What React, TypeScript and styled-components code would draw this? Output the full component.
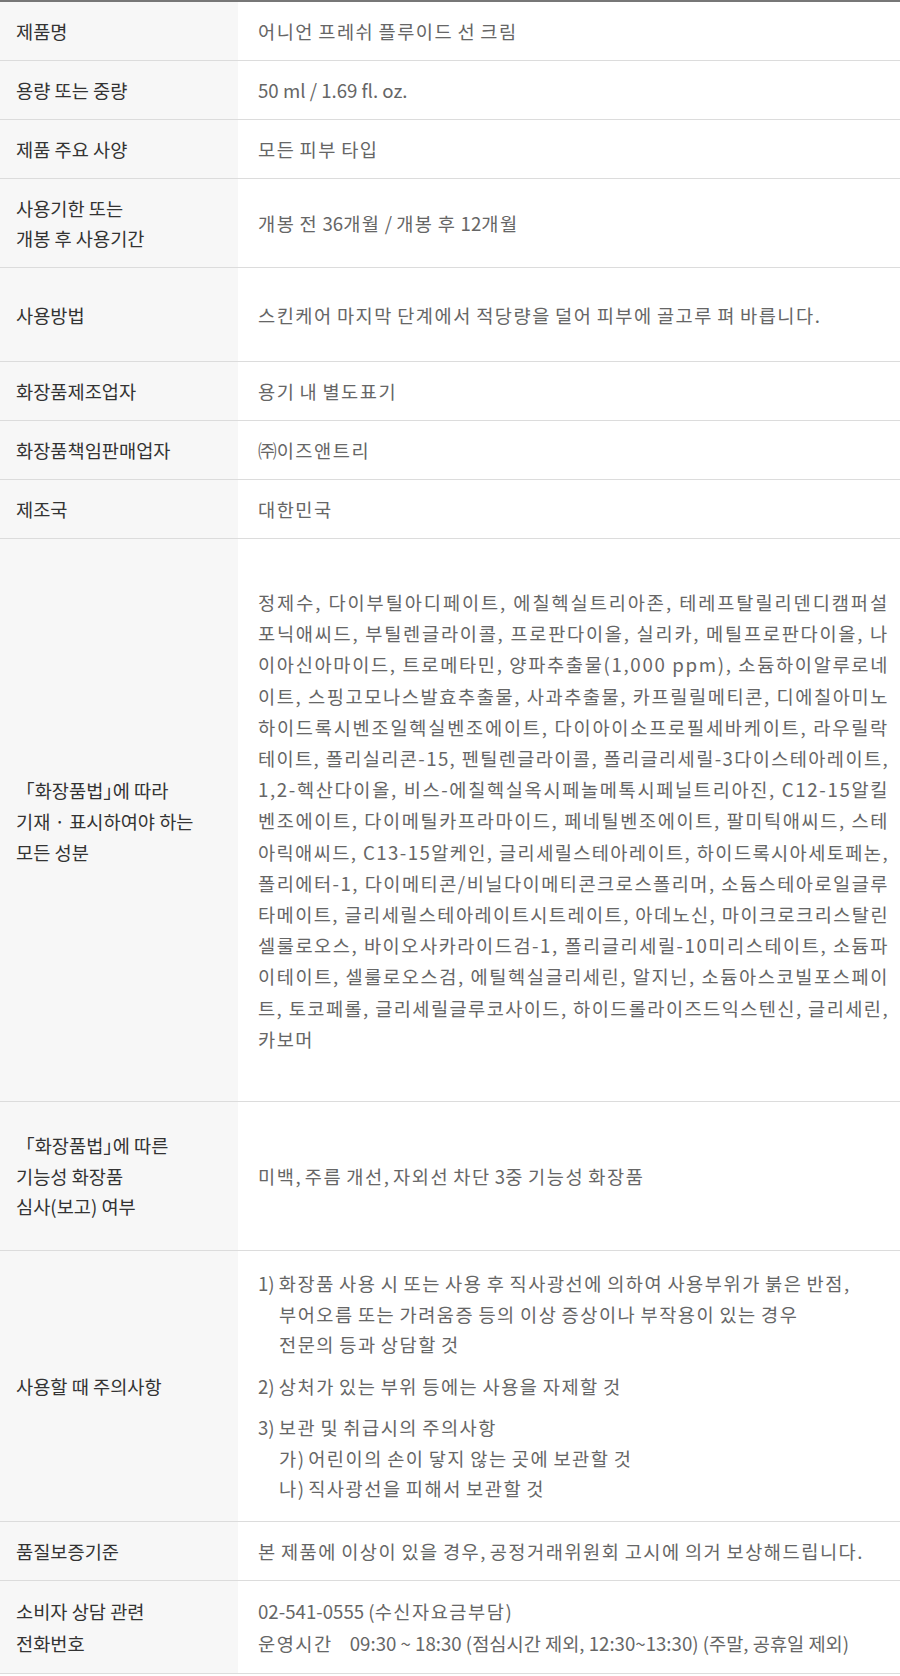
import React, {useLayoutEffect, useRef, useState} from 'react';
import styled, {createGlobalStyle} from 'styled-components';

const GlobalStyle = createGlobalStyle`
  html, body {
    margin: 0;
    padding: 0;
    background: #fff;
  }
  body {
    font-family: "Noto Sans CJK KR", "Noto Sans", sans-serif;
  }
`;

const Table = styled.div`
  width: 900px;
  border-top: 2px solid #777;
  font-size: 18.67px;
  line-height: 30px;
`;

const Row = styled.div<{ $minHeight?: number }>`
  display: grid;
  grid-template-columns: 238px 1fr;
  min-height: ${p => (p.$minHeight ? `${p.$minHeight}px` : 'auto')};
  border-bottom: 1px solid #dcdcdc;
`;

const Label = styled.div<{ $lineHeight?: number }>`
  display: flex;
  flex-direction: column;
  justify-content: center;
  padding: 14px 16px;
  background: #f7f7f7;
  color: #333;
  line-height: ${p => (p.$lineHeight ? `${p.$lineHeight}px` : 'inherit')};
`;

const Value = styled.div<{ $lineHeight?: number }>`
  display: flex;
  flex-direction: column;
  justify-content: center;
  padding: 14px 11px 14px 20px;
  color: #666;
  line-height: ${p => (p.$lineHeight ? `${p.$lineHeight}px` : 'inherit')};
`;

// hangul in the value column sits on a full em
const Wide = styled.span`
  letter-spacing: 1.52px;
`;

const CloseBracket = styled.span`
  font-feature-settings: "halt";
`;

const IngredientBox = styled.div`
  display: flex;
  flex-direction: column;
  align-items: flex-start;
`;

const IngredientLine = styled.span`
  display: block;
  white-space: nowrap;
`;

const Notice = styled.div`
  padding-left: 21px;
  text-indent: -21px;
  & + & {
    margin-top: 10.5px;
  }
`;

const Hours = styled.span`
  margin-right: 17px;
`;

const HANGUL = /([\uAC00-\uD7A3]+)/;

const Text = ({children}: { children: string }) => (
    <>
        {children.split(HANGUL).map((part, i) => (i % 2 ? <Wide key={i}>{part}</Wide> : part))}
    </>
);

const ingredients = [
    '정제수, 다이부틸아디페이트, 에칠헥실트리아존, 테레프탈릴리덴디캠퍼설',
    '포닉애씨드, 부틸렌글라이콜, 프로판다이올, 실리카, 메틸프로판다이올, 나',
    '이아신아마이드, 트로메타민, 양파추출물(1,000 ppm), 소듐하이알루로네',
    '이트, 스핑고모나스발효추출물, 사과추출물, 카프릴릴메티콘, 디에칠아미노',
    '하이드록시벤조일헥실벤조에이트, 다이아이소프로필세바케이트, 라우릴락',
    '테이트, 폴리실리콘-15, 펜틸렌글라이콜, 폴리글리세릴-3다이스테아레이트,',
    '1,2-헥산다이올, 비스-에칠헥실옥시페놀메톡시페닐트리아진, C12-15알킬',
    '벤조에이트, 다이메틸카프라마이드, 페네틸벤조에이트, 팔미틱애씨드, 스테',
    '아릭애씨드, C13-15알케인, 글리세릴스테아레이트, 하이드록시아세토페논,',
    '폴리에터-1, 다이메티콘/비닐다이메티콘크로스폴리머, 소듐스테아로일글루',
    '타메이트, 글리세릴스테아레이트시트레이트, 아데노신, 마이크로크리스탈린',
    '셀룰로오스, 바이오사카라이드검-1, 폴리글리세릴-10미리스테이트, 소듐파',
    '이테이트, 셀룰로오스검, 에틸헥실글리세린, 알지닌, 소듐아스코빌포스페이',
    '트, 토코페롤, 글리세릴글루코사이드, 하이드롤라이즈드익스텐신, 글리세린,',
    '카보머',
];

// every line but the last is spread over the full width, letter by letter
const Ingredients = () => {
    const boxRef = useRef<HTMLDivElement>(null);
    const lineRefs = useRef<(HTMLSpanElement | null)[]>([]);
    const [spacing, setSpacing] = useState<number[]>([]);

    useLayoutEffect(() => {
        const box = boxRef.current;
        if (!box) return;
        const target = box.clientWidth;
        setSpacing(lineRefs.current.map((el, i) => {
            if (!el || i === ingredients.length - 1) return 0;
            const w = el.getBoundingClientRect().width;
            return (target - w) / Array.from(ingredients[i]).length;
        }));
    }, []);

    return (
        <IngredientBox ref={boxRef}>
            {ingredients.map((line, i) => (
                <IngredientLine
                    key={i}
                    ref={el => { lineRefs.current[i] = el; }}
                    style={spacing[i] ? {letterSpacing: `${spacing[i]}px`} : undefined}
                >
                    {i === ingredients.length - 1 ? <Text>{line}</Text> : line}
                </IngredientLine>
            ))}
        </IngredientBox>
    );
};

const simpleRows: [string, string][] = [
    ['제품명', '어니언 프레쉬 플루이드 선 크림'],
    ['용량 또는 중량', '50 ml / 1.69 fl. oz.'],
    ['제품 주요 사양', '모든 피부 타입'],
];

const notices = [
    ['1) 화장품 사용 시 또는 사용 후 직사광선에 의하여 사용부위가 붉은 반점,', '부어오름 또는 가려움증 등의 이상 증상이나 부작용이 있는 경우', '전문의 등과 상담할 것'],
    ['2) 상처가 있는 부위 등에는 사용을 자제할 것'],
    ['3) 보관 및 취급시의 주의사항', '가) 어린이의 손이 닿지 않는 곳에 보관할 것', '나) 직사광선을 피해서 보관할 것'],
];

const App = () => {
    return (
        <>
            <GlobalStyle/>
            <Table>
                {simpleRows.map(([label, value]) => (
                    <Row key={label}>
                        <Label>{label}</Label>
                        <Value><span><Text>{value}</Text></span></Value>
                    </Row>
                ))}
                <Row>
                    <Label>사용기한 또는<br/>개봉 후 사용기간</Label>
                    <Value><span><Text>개봉 전 36개월 / 개봉 후 12개월</Text></span></Value>
                </Row>
                <Row $minHeight={93}>
                    <Label>사용방법</Label>
                    <Value><span><Text>스킨케어 마지막 단계에서 적당량을 덜어 피부에 골고루 펴 바릅니다.</Text></span></Value>
                </Row>
                <Row>
                    <Label>화장품제조업자</Label>
                    <Value><span><Text>용기 내 별도표기</Text></span></Value>
                </Row>
                <Row>
                    <Label>화장품책임판매업자</Label>
                    <Value><span><Text>㈜이즈앤트리</Text></span></Value>
                </Row>
                <Row>
                    <Label>제조국</Label>
                    <Value><span><Text>대한민국</Text></span></Value>
                </Row>
                <Row $minHeight={562}>
                    <Label $lineHeight={31}>
                        <span>「화장품법<CloseBracket>」</CloseBracket>에 따라</span>
                        <span>기재 · 표시하여야 하는</span>
                        <span>모든 성분</span>
                    </Label>
                    <Value $lineHeight={31.2}>
                        <Ingredients/>
                    </Value>
                </Row>
                <Row $minHeight={148}>
                    <Label $lineHeight={30.5}>
                        <span>「화장품법<CloseBracket>」</CloseBracket>에 따른</span>
                        <span>기능성 화장품</span>
                        <span>심사(보고) 여부</span>
                    </Label>
                    <Value><span><Text>미백, 주름 개선, 자외선 차단 3중 기능성 화장품</Text></span></Value>
                </Row>
                <Row $minHeight={270}>
                    <Label>사용할 때 주의사항</Label>
                    <Value $lineHeight={30.7}>
                        {notices.map((lines, i) => (
                            <Notice key={i}>
                                {lines.map((line, j) => (
                                    <React.Fragment key={j}>
                                        {j > 0 && <br/>}
                                        <Text>{line}</Text>
                                    </React.Fragment>
                                ))}
                            </Notice>
                        ))}
                    </Value>
                </Row>
                <Row>
                    <Label>품질보증기준</Label>
                    <Value><span><Text>본 제품에 이상이 있을 경우, 공정거래위원회 고시에 의거 보상해드립니다.</Text></span></Value>
                </Row>
                <Row $minHeight={92}>
                    <Label $lineHeight={32}>소비자 상담 관련<br/>전화번호</Label>
                    <Value $lineHeight={32}>
                        <span><Text>02-541-0555 (수신자요금부담)</Text></span>
                        <span><Hours><Text>운영시간</Text></Hours>09:30 ~ 18:30 (점심시간 제외, 12:30~13:30) (주말, 공휴일 제외)</span>
                    </Value>
                </Row>
            </Table>
        </>
    );
};

export default App;
